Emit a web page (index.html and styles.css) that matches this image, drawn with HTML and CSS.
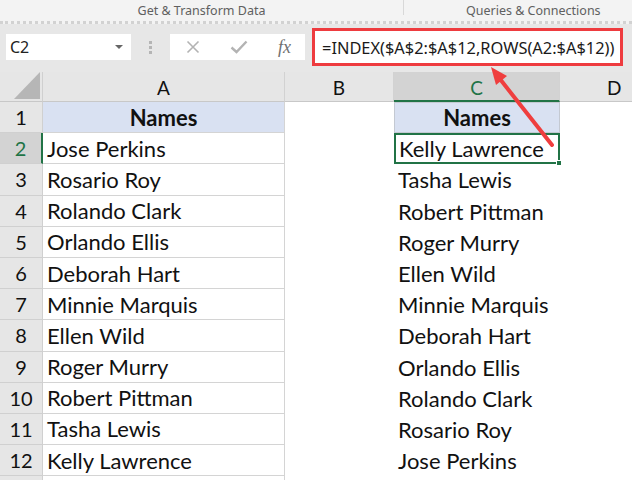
FILE: index.html
```html
<!DOCTYPE html>
<html>
<head>
    <meta charset="UTF-8">
    <meta name="viewport" content="width=device-width, initial-scale=1.0">
    <title>INDEX reverse list</title>
    <link rel="stylesheet" href="styles.css">
</head>
<body>
    <div class="ribbon">
        <div class="group group-data">Get &amp; Transform Data</div>
        <div class="group group-queries">Queries &amp; Connections</div>
    </div>

    <div class="formula-bar">
        <div class="name-box">
            <span>C2</span>
            <span class="caret"></span>
        </div>
        <div class="grip"><i></i><i></i><i></i></div>
        <div class="fx-buttons">
            <svg class="btn" width="14" height="14" viewBox="0 0 14 14">
                <path d="M1.5 1.5 L12.5 12.5 M12.5 1.5 L1.5 12.5" stroke="#b3b3b3" stroke-width="1.6" fill="none"/>
            </svg>
            <svg class="btn" width="18" height="14" viewBox="0 0 18 14">
                <path d="M1.5 7.5 L6.5 12 L16.5 1.5" stroke="#b3b3b3" stroke-width="2.4" fill="none"/>
            </svg>
            <span class="fx">fx</span>
        </div>
        <div class="formula">=INDEX($A$2:$A$12,ROWS(A2:$A$12))</div>
    </div>

    <div class="sheet">
        <div class="corner"><span class="tri"></span></div>
        <div class="col-head">A</div>
        <div class="col-head">B</div>
        <div class="col-head active">C</div>
        <div class="col-head last">D</div>

        <div class="row-head">1</div>
        <div class="cell a title">Names</div>
        <div class="cell"></div>
        <div class="cell c title">Names</div>
        <div class="cell"></div>

        <div class="row-head active">2</div>
        <div class="cell a">Jose Perkins</div>
        <div class="cell"></div>
        <div class="cell c selected">Kelly Lawrence<span class="handle"></span></div>
        <div class="cell"></div>

        <div class="row-head">3</div>
        <div class="cell a">Rosario Roy</div>
        <div class="cell"></div>
        <div class="cell c">Tasha Lewis</div>
        <div class="cell"></div>

        <div class="row-head">4</div>
        <div class="cell a">Rolando Clark</div>
        <div class="cell"></div>
        <div class="cell c">Robert Pittman</div>
        <div class="cell"></div>

        <div class="row-head">5</div>
        <div class="cell a">Orlando Ellis</div>
        <div class="cell"></div>
        <div class="cell c">Roger Murry</div>
        <div class="cell"></div>

        <div class="row-head">6</div>
        <div class="cell a">Deborah Hart</div>
        <div class="cell"></div>
        <div class="cell c">Ellen Wild</div>
        <div class="cell"></div>

        <div class="row-head">7</div>
        <div class="cell a">Minnie Marquis</div>
        <div class="cell"></div>
        <div class="cell c">Minnie Marquis</div>
        <div class="cell"></div>

        <div class="row-head">8</div>
        <div class="cell a">Ellen Wild</div>
        <div class="cell"></div>
        <div class="cell c">Deborah Hart</div>
        <div class="cell"></div>

        <div class="row-head">9</div>
        <div class="cell a">Roger Murry</div>
        <div class="cell"></div>
        <div class="cell c">Orlando Ellis</div>
        <div class="cell"></div>

        <div class="row-head">10</div>
        <div class="cell a">Robert Pittman</div>
        <div class="cell"></div>
        <div class="cell c">Rolando Clark</div>
        <div class="cell"></div>

        <div class="row-head">11</div>
        <div class="cell a">Tasha Lewis</div>
        <div class="cell"></div>
        <div class="cell c">Rosario Roy</div>
        <div class="cell"></div>

        <div class="row-head">12</div>
        <div class="cell a">Kelly Lawrence</div>
        <div class="cell"></div>
        <div class="cell c">Jose Perkins</div>
        <div class="cell"></div>

        <div class="row-head stub"></div>
        <div class="cell a stub"></div>
        <div class="cell"></div>
        <div class="cell"></div>
        <div class="cell"></div>
    </div>

    <!-- callout arrow pointing at the formula -->
    <svg class="arrow" width="632" height="481" viewBox="0 0 632 481">
        <line x1="552" y1="145" x2="500" y2="79" stroke="#ef3e3e" stroke-width="4" stroke-linecap="round"/>
        <polygon points="491,67 507,76 496,85" fill="#ef3e3e"/>
    </svg>
</body>
</html>
```

FILE: styles.css
```css
* {
    padding: 0;
    margin: 0;
    box-sizing: border-box;
}
html, body {
    width: 632px;
    height: 481px;
    overflow: hidden;
    background: #ffffff;
}
body {
    position: relative;
    font-family: "Lato", "Liberation Sans", sans-serif;
    color: #111;
}

/* ribbon group labels */
.ribbon {
    display: flex;
    height: 24px;
    background: #f3f3f3;
    border-bottom: 3px dotted #d2d2d2;
    font-family: "Noto Sans", "Liberation Sans", sans-serif;
    font-size: 12.5px;
    color: #606060;
    white-space: nowrap;
}
.group {
    padding-top: 2px;
}
.group-data {
    width: 404px;
    text-align: center;
    border-right: 1px solid #d8d8d8;
    margin-bottom: 6px;
}
.group-queries {
    flex: 1;
    padding-left: 62px;
}

/* formula bar */
.formula-bar {
    display: flex;
    align-items: center;
    height: 48px;
    padding: 0 0 2px 6px;
    background: #e7e7e7;
}
.name-box {
    width: 125px;
    height: 26px;
    background: #fff;
    display: flex;
    align-items: center;
    justify-content: space-between;
    padding: 0 8px 0 4px;
    font-family: "Noto Sans", "Liberation Sans", sans-serif;
    font-size: 16px;
    color: #222;
}
.caret {
    width: 0;
    height: 0;
    border-left: 4px solid transparent;
    border-right: 4px solid transparent;
    border-top: 4px solid #666;
}
.grip {
    width: 39px;
    display: flex;
    flex-direction: column;
    align-items: center;
    gap: 2px;
}
.grip i {
    width: 3px;
    height: 3px;
    background: #b5b5b5;
}
.fx-buttons {
    width: 135px;
    height: 26px;
    background: #fff;
    display: flex;
    align-items: center;
    justify-content: space-between;
    padding: 0 14px 0 16px;
}
.btn {
    display: block;
}
.fx {
    font-family: "Liberation Serif", serif;
    font-style: italic;
    font-size: 18px;
    color: #707070;
}
.formula {
    width: 311px;
    height: 38px;
    margin-left: 7px;
    background: #fff;
    border: 3px solid #ee3b3f;
    display: flex;
    align-items: center;
    padding-left: 7px;
    font-family: "Noto Sans", "Liberation Sans", sans-serif;
    font-size: 16.4px;
    color: #1a1a1a;
    white-space: nowrap;
    overflow: hidden;
}

/* worksheet grid */
.sheet {
    display: grid;
    grid-template-columns: 43px 242px 109px 166px 72px;
    grid-template-rows: 30px repeat(12, 31.2px) 4px;
    background: #fff;
}
.corner {
    background: #e6e6e6;
    border-right: 1px solid #d0d0d0;
    border-bottom: 1px solid #c8c8c8;
    position: relative;
}
.tri {
    position: absolute;
    right: 2px;
    bottom: 2px;
    width: 26px;
    height: 27px;
    background: #b6b6b6;
    clip-path: polygon(100% 0, 100% 100%, 0 100%);
}
.col-head {
    background: #e6e6e6;
    border-right: 1px solid #d2d2d2;
    border-bottom: 1px solid #c8c8c8;
    display: flex;
    align-items: center;
    justify-content: center;
    padding-top: 2px;
    font-size: 19px;
    color: #111;
}
.col-head.last {
    justify-content: flex-start;
    padding-left: 47px;
    border-right: none;
}
.col-head.active {
    background: #d3d3d3;
    color: #217346;
    border-bottom: 2px solid #217346;
}
.row-head {
    background: #e6e6e6;
    border-right: 1px solid #d0d0d0;
    border-bottom: 1px solid #d0d0d0;
    display: flex;
    align-items: center;
    justify-content: center;
    font-size: 20px;
    color: #111;
}
.row-head.active {
    background: #d3d3d3;
    color: #217346;
    border-right: 2px solid #217346;
}
.row-head.stub {
    border-bottom: none;
}
.cell {
    display: flex;
    align-items: center;
    padding-left: 4px;
    font-size: 22px;
    white-space: nowrap;
}
.cell.a {
    border-right: 1px solid #d4d4d4;
    border-bottom: 1px solid #d4d4d4;
}
.cell.a.stub {
    border-bottom: none;
}
.cell.title {
    background: #d9e1f2;
    justify-content: center;
    font-weight: bold;
    padding-left: 0;
}
.cell.c.title {
    border: 1px solid #c4c9d2;
}
.cell.selected {
    position: relative;
    border: 2px solid #217346;
    padding-left: 3px;
}
.handle {
    position: absolute;
    right: -4px;
    bottom: -4px;
    width: 6px;
    height: 6px;
    background: #217346;
    border: 1px solid #fff;
}

.arrow {
    position: absolute;
    left: 0;
    top: 0;
    pointer-events: none;
}
```
